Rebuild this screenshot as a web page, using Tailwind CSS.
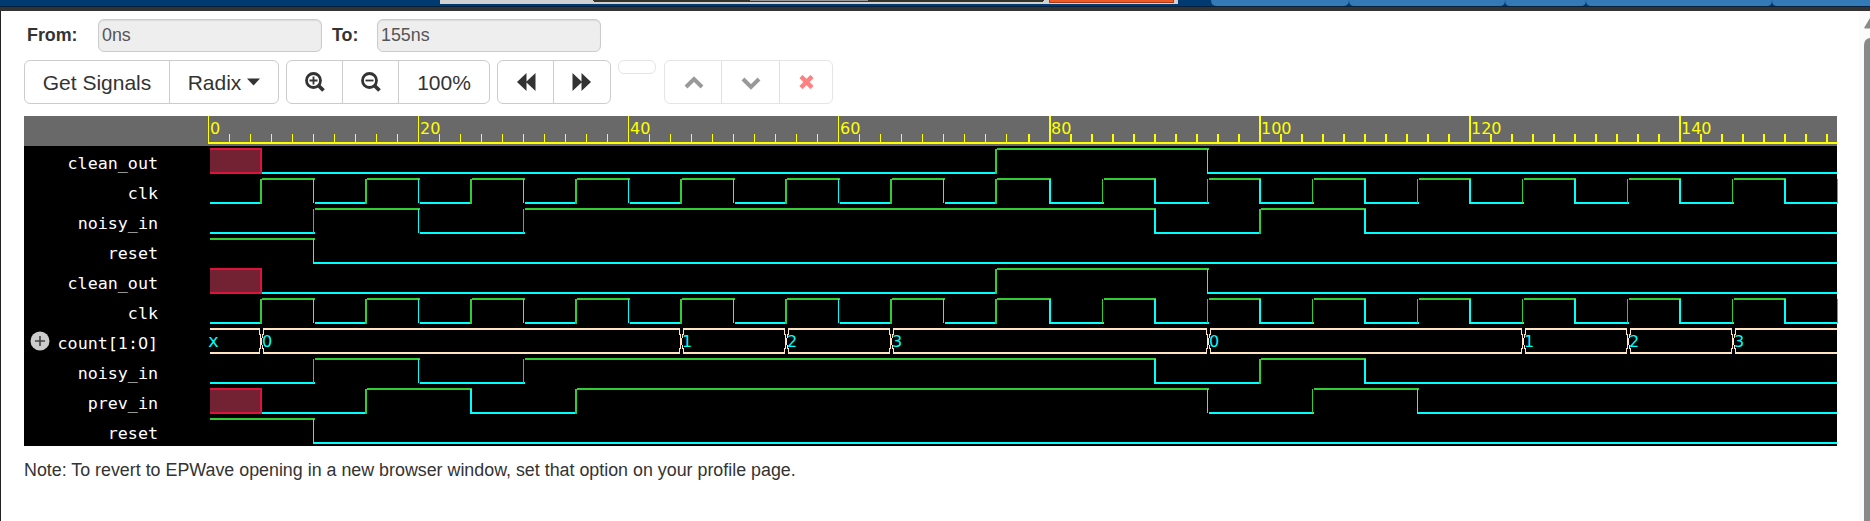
<!DOCTYPE html>
<html lang="en">
<head>
<meta charset="utf-8">
<title>EPWave</title>
<script src="https://cdn.jsdelivr.net/npm/@tailwindcss/browser@4"></script>
</head>
<body class="h-[521px] w-[1870px] overflow-hidden bg-white font-['Liberation_Sans',sans-serif] text-[#333]">
<div class="flex h-[521px] flex-col">
  <header class="h-[11px] shrink-0">
    <svg class="block" width="1870" height="11" shape-rendering="crispEdges">
      <rect width="1870" height="6" fill="#003a70"/>
      <rect y="6" width="1870" height="1" fill="#05203c"/>
      <rect y="7" width="1870" height="4" fill="#333"/>
      <rect x="440" width="738" height="4" fill="#d2d2d2"/>
      <path d="M592 0h452l-2 2H594z" fill="#34342a"/>
      <rect x="750" width="118" height="1" fill="#999"/>
      <rect x="1049" width="125" height="3" fill="#a33b1d"/>
      <rect x="1050" width="123" height="2" fill="#f15a24"/>
      <g fill="#337ab7" shape-rendering="auto">
        <path d="M1211 0h138q0 6-6 6h-126q-6 0-6-6z"/><path d="M1349 0h156q0 6-5 6h-146q-5 0-5-6z"/><path d="M1505 0h81q0 6-5 6h-71q-5 0-5-6z"/><path d="M1586 0h186q0 6-5 6h-176q-5 0-5-6z"/><path d="M1772 0h98v6h-93q-5 0-5-6z"/>
      </g>
    </svg>
  </header>
  <div class="flex flex-1 border-l border-[#222]">
    <main class="flex-1 pl-[23px] pt-2">
      <div class="flex h-[33px] items-center text-[17.85px] leading-none">
        <b class="w-[74px] pl-[3px]">From:</b>
        <div class="flex h-[33px] w-[224px] items-center rounded-[6px] border border-[#ccc] bg-[#eee] pl-[3px] text-[#555] shadow-[inset_0_1px_1px_rgba(0,0,0,0.08)]">0ns</div>
        <b class="w-[55px] pl-[10px]">To:</b>
        <div class="flex h-[33px] w-[224px] items-center rounded-[6px] border border-[#ccc] bg-[#eee] pl-[3px] text-[#555] shadow-[inset_0_1px_1px_rgba(0,0,0,0.08)]">155ns</div>
      </div>
      <div class="mt-2 flex h-[44px] items-start text-[21px] leading-none">
        <div class="flex h-[44px] w-[255px] divide-x divide-[#ccc] rounded-[6px] border border-[#ccc]">
          <div class="flex w-[145px] items-center justify-center">Get Signals</div>
          <div class="flex flex-1 items-center justify-center gap-[6px]">Radix<svg width="13" height="8"><path d="M0 0.500h13L6.500 7.500z" fill="#333"/></svg></div>
        </div>
        <div class="ml-[7px] flex h-[44px] w-[204px] divide-x divide-[#ccc] rounded-[6px] border border-[#ccc]">
          <div class="flex w-[56px] items-center justify-center"><svg width="20" height="20" fill="none" stroke="#333"><circle cx="8.500" cy="8.500" r="7" stroke-width="2.800"/><path d="M13.500 13.500l5 5" stroke-width="3.800"/><path d="M4.500 8.500h8M8.500 4.500v8" stroke-width="1.800"/></svg></div>
          <div class="flex w-[56px] items-center justify-center"><svg width="20" height="20" fill="none" stroke="#333"><circle cx="8.500" cy="8.500" r="7" stroke-width="2.800"/><path d="M13.500 13.500l5 5" stroke-width="3.800"/><path d="M4.500 8.500h8" stroke-width="1.800"/></svg></div>
          <div class="flex flex-1 items-center justify-center">100%</div>
        </div>
        <div class="ml-[7px] flex h-[44px] w-[114px] divide-x divide-[#ccc] rounded-[6px] border border-[#ccc]">
          <div class="flex w-[56px] items-center justify-center pl-[2px]"><svg width="19" height="18" fill="#333"><path d="M0 9L9.500 0v8.500L18.500 0v18L9.500 9.500V18z"/></svg></div>
          <div class="flex flex-1 items-center justify-center pr-[2px]"><svg width="19" height="18" fill="#333"><path d="M19 9L9.500 0v8.500L0.500 0v18L9.500 9.500V18z"/></svg></div>
        </div>
        <div class="ml-[7px] h-[14px] w-[38px] rounded-[6px] border border-[#e5e5e5]"></div>
        <div class="ml-2 flex h-[44px] w-[169px] divide-x divide-[#e0e0e0] rounded-[6px] border border-[#e5e5e5]">
          <div class="flex w-[57px] items-center justify-center pt-px pl-px"><svg width="20" height="13" fill="none" stroke="#999" stroke-width="4"><path d="M2 11L10 3l8 8"/></svg></div>
          <div class="flex w-[58px] items-center justify-center pt-[2px]"><svg width="20" height="13" fill="none" stroke="#999" stroke-width="4"><path d="M2 2l8 8 8-8"/></svg></div>
          <div class="flex flex-1 items-center justify-center"><svg width="15" height="14" fill="none" stroke="#ff8080" stroke-width="4.500"><path d="M2 1.500l11 11M13 1.500l-11 11"/></svg></div>
        </div>
      </div>
      <section id="wave" class="mt-3 w-[1814px]"></section>
      <p class="mt-3 text-[17.85px] leading-[25px]">Note: To revert to EPWave opening in a new browser window, set that option on your profile page.</p>
    </main>
    <aside class="w-[11px] bg-[#fbfbfb] pl-[5px] pt-[7px]">
      <svg class="block" width="6" height="503" fill="#888a8a"><path d="M0 10L6 0v10.500H1.500z"/><path d="M0 503V27q0-6 6-7v483z"/></svg>
    </aside>
  </div>
</div>
<script>
const ORIGIN = 208, END = 1837;
const edge = t => t <= 76
  ? { x: Math.floor(ORIGIN + 10.5 * t), w: t % 2 ? 2 : 1 }
  : { x: Math.ceil(ORIGIN + 1 + 10.5 * t), w: t % 2 ? 1 : 2 };
const rect = (x, y, w, h, c) => `<rect x="${x - ORIGIN}" y="${y}" width="${w}" height="${h}" fill="${c}"/>`;
const G = '#32cd32', C = '#00ffff', B = '#ffe4c4';

function bits(ch) {
  let s = '';
  ch.forEach(([t, v], i) => {
    const e = edge(t), last = i === ch.length - 1, col = v === 1 ? G : C;
    const from = t === 0 ? 210 : last && e.w === 1 ? e.x : e.x + 2;
    const to = last ? END : edge(ch[i + 1][0]).x + 2;
    if (v === 'x') {
      s += rect(from, 2, to - from, 26, '#dc143c') + rect(from, 4, to - from - 2, 22, '#722233');
    } else {
      s += rect(from, v ? 2 : 26, to - from, 2, col);
      if (t && ch[i - 1][1] !== 'x') s += rect(e.x, 3, e.w, e.w === 2 ? 25 : 24, col);
    }
  });
  return s;
}
function bus(ch) {
  let s = '';
  const centre = t => edge(t).x;
  ch.forEach(([t, v], i) => {
    const c = centre(t), from = t ? c + 3 : 210;
    const to = i === ch.length - 1 ? END : centre(ch[i + 1][0]);
    s += rect(from, 2, to - from, 2, B) + rect(from, 26, to - from, 2, B);
    if (t) s += rect(c - 1, 3, 1, 6, B) + rect(c, 8, 1, 15, B) + rect(c + 1, 12, 1, 7, B) + rect(c + 2, 8, 1, 4, B) + rect(c + 2, 19, 1, 4, B) + rect(c + 3, 3, 1, 6, B) + rect(c - 1, 22, 1, 5, B) + rect(c + 3, 22, 1, 5, B);
    s += v === 'x'
      ? `<text x="0" y="21" fill="${C}" font-size="18" class="font-['DejaVu_Sans_Mono',monospace]">x</text>`
      : `<text x="${c + 2 - ORIGIN}" y="21" fill="${C}" font-size="16">${v}</text>`;
  });
  return s;
}
const clk = [[0, 0]];
for (let t = 5; t <= 155; t += 5) clk.push([t, (t / 5) % 2]);
const clean = [[0, 'x'], [5, 0], [75, 1], [95, 0]];
const noisy = [[0, 0], [10, 1], [20, 0], [30, 1], [90, 0], [100, 1], [110, 0]];
const reset = [[0, 1], [10, 0]];
const prev = [[0, 'x'], [5, 0], [15, 1], [25, 0], [35, 1], [95, 0], [105, 1], [115, 0]];
const count = [[0, 'x'], [5, 0], [45, 1], [55, 2], [65, 3], [95, 0], [125, 1], [135, 2], [145, 3]];
// The last clock edge falls on the chart's right border: only its stem is drawn.
const clock = () => bits(clk.slice(0, -1)) + rect(1837, 3, 1, 24, G);

const svg = inner => `<svg class="block shrink-0 overflow-visible font-['DejaVu_Sans',sans-serif]" width="${END - ORIGIN}" height="30" shape-rendering="crispEdges">${inner}</svg>`;
let ruler = rect(208, 26, END - 208, 2, '#ff0');
for (let t = 0; t <= 154; t += 2) {
  const e = edge(t), major = t % 20 === 0;
  ruler += rect(e.x, major ? 0 : 18, e.w, major ? 26 : 8, '#ff0');
  if (major) ruler += `<text x="${e.x + 2 - ORIGIN}" y="18" font-size="16" fill="#ff0">${t}</text>`;
}
const rows = [['clean_out', bits(clean)], ['clk', clock()], ['noisy_in', bits(noisy)], ['reset', bits(reset)],
  ['clean_out', bits(clean)], ['clk', clock()], ['count[1:0]', bus(count)], ['noisy_in', bits(noisy)], ['prev_in', bits(prev)], ['reset', bits(reset)]];
const plus = `<svg width="20" height="20" class="mr-auto ml-[6px]"><circle cx="10" cy="10" r="9.500" fill="#ccc"/><path d="M10 5v10M5 10h10" stroke="#444" stroke-width="1.600"/></svg>`;
document.getElementById('wave').innerHTML =
  `<div class="flex h-[30px] w-[1813px] bg-[#696969]"><div class="w-[184px] shrink-0"></div>${svg(ruler)}</div>` +
  rows.map(([n, w]) => `<div class="flex h-[30px] w-[1813px] bg-black"><div class="flex w-[184px] shrink-0 items-center pr-[50px] font-['DejaVu_Sans_Mono',monospace] text-[16.7px] leading-[30px] text-white">${n.includes('[') ? plus : '<span class="mr-auto"></span>'}<span class="pt-[4px] leading-[26px]">${n.replace('0', '<span class="inline-block w-[10px] font-[\'DejaVu_Sans\',sans-serif] text-[16px] leading-none">0</span>')}</span></div>${svg(w)}</div>`).join('');
</script>
</body>
</html>
